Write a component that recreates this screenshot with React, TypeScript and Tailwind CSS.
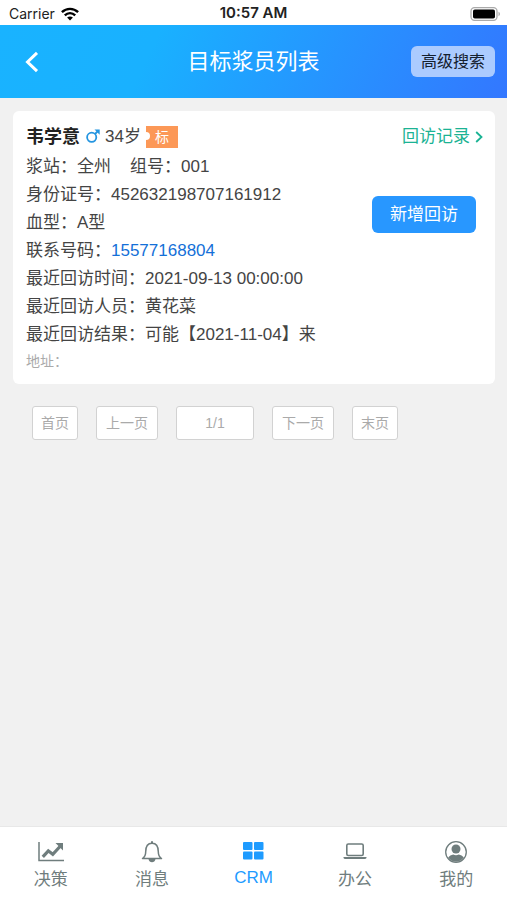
import type { ReactNode } from "react"

type Tab = {
  label: string
  icon: ReactNode
  active?: boolean
}

const details = [
  { label: "身份证号", value: "452632198707161912" },
  { label: "血型", value: "A型" },
  { label: "联系号码", value: "15577168804", tel: true },
  { label: "最近回访时间", value: "2021-09-13 00:00:00" },
  { label: "最近回访人员", value: "黄花菜" },
  { label: "最近回访结果", value: "可能【2021-11-04】来" },
]

const pages = [
  { label: "首页", width: "w-[46px]" },
  { label: "上一页", width: "w-[62px]" },
  { label: "1/1", width: "w-[78px]" },
  { label: "下一页", width: "w-[62px]" },
  { label: "末页", width: "w-[46px]" },
]

const tabs: Tab[] = [
  {
    label: "决策",
    icon: (
      <svg width="28" height="24" viewBox="0 0 28 24" fill="none" stroke="currentColor">
        <path d="M2 2v18.500h25" strokeWidth="1.500" />
        <path d="M5.800 16.800l5.500-6 4.500 3.500L23 6.500" strokeWidth="3.200" />
        <path d="M18.500 3h7.500v7.500z" fill="currentColor" stroke="none" />
      </svg>
    ),
  },
  {
    label: "消息",
    icon: (
      <svg width="28" height="24" viewBox="0 0 28 24" fill="none" stroke="currentColor">
        <path
          d="M4.500 18.600c2.400-1.600 3.200-3 3.200-6.800 0-5 2.200-8.500 6.300-8.500s6.300 3.500 6.300 8.500c0 3.800.8 5.200 3.200 6.800z"
          strokeWidth="1.500"
          strokeLinejoin="round"
        />
        <path d="M14 1.200v2" strokeWidth="2" />
        <path d="M10.500 19h7c-.4 2.200-1.800 3.200-3.500 3.200s-3.100-1-3.500-3.200z" fill="currentColor" stroke="none" />
      </svg>
    ),
  },
  {
    label: "CRM",
    active: true,
    icon: (
      <svg width="28" height="24" viewBox="0 0 28 24" fill="currentColor">
        <rect x="4" y="2" width="9.500" height="8" rx="1" />
        <rect x="15" y="2" width="9.500" height="8" rx="1" />
        <rect x="4" y="11.500" width="9.500" height="8" rx="1" />
        <rect x="15" y="11.500" width="9.500" height="8" rx="1" />
      </svg>
    ),
  },
  {
    label: "办公",
    icon: (
      <svg width="28" height="24" viewBox="0 0 28 24" fill="none" stroke="currentColor">
        <rect x="5.800" y="4" width="16.400" height="11.500" rx="1.500" strokeWidth="1.600" />
        <path d="M2.500 17h23v.6c0 .8-.6 1.400-1.400 1.400H3.900c-.8 0-1.400-.6-1.400-1.400z" fill="currentColor" stroke="none" />
      </svg>
    ),
  },
  {
    label: "我的",
    icon: (
      <svg width="28" height="24" viewBox="0 0 28 24" fill="none" stroke="currentColor">
        <circle cx="14" cy="12" r="10.300" strokeWidth="1.300" />
        <circle cx="14" cy="9" r="4.500" fill="currentColor" stroke="none" />
        <path d="M6.200 17.600c1.200-1.900 3-2.800 5-3.200 1.800 1 3.800 1 5.600 0 2 .4 3.800 1.300 5 3.200-1.800 2.600-4.500 4.200-7.800 4.200s-6-1.600-7.800-4.200z" fill="currentColor" stroke="none" />
      </svg>
    ),
  },
]

function StatusBar() {
  return (
    <div className="grid h-[25px] grid-cols-3 items-center bg-white px-[6px] pt-[2px] font-[Inter,sans-serif] text-[14px] text-[#222]">
      <div className="flex items-center gap-[6px] pl-[3px]">
        <span>Carrier</span>
        <svg width="18" height="14" viewBox="0 0 18 14" fill="none" stroke="#000" strokeWidth="2.400">
          <path d="M.9 5.200c4.700-4.500 11.500-4.500 16.200 0" />
          <path d="M3.800 8.300c3-2.900 7.400-2.900 10.400 0" />
          <path d="M9 13.600l-2.900-3c1.700-1.500 4.100-1.500 5.800 0z" fill="#000" stroke="none" />
        </svg>
      </div>
      <span className="text-center text-[15px] font-semibold">10:57 AM</span>
      <svg className="justify-self-end" width="31" height="14" viewBox="0 0 31 14">
        <rect x="1" y=".7" width="26" height="12.600" rx="3.500" fill="#fff" stroke="#aaa" strokeWidth="1.300" />
        <rect x="3" y="2.400" width="22" height="9.200" rx="1.800" fill="#000" />
        <path d="M28.500 4.800c1.900.7 1.900 3.700 0 4.400z" fill="#aaa" />
      </svg>
    </div>
  )
}

function Header() {
  return (
    <header className="grid h-[73px] grid-cols-[1fr_auto_1fr] items-center bg-linear-[115deg,#19b3ff_0%,#19b1ff_30%,#3377ff_100%] px-3">
      <button aria-label="返回" className="ml-[6px] flex size-7 items-center justify-center text-white">
        <svg width="14" height="22" viewBox="0 0 14 22" fill="none" stroke="currentColor" strokeWidth="3">
          <path d="M12 1.800L2.500 11l9.500 9.200" />
        </svg>
      </button>
      <h1 className="text-[22px] text-white">目标浆员列表</h1>
      <button className="h-[31px] justify-self-end rounded-md bg-[#abcbff] px-[10px] text-[16px] text-[#14202e]">
        高级搜索
      </button>
    </header>
  )
}

function DonorCard() {
  return (
    <section className="mt-[13px] mr-3 ml-[13px] rounded-md bg-white pt-[10px] pr-3 pb-[11px] pl-[13px] text-[17px] leading-[28px] text-[#444]">
      <div className="flex h-[32px] items-center">
        <h2 className="text-[18px] font-bold text-[#222]">韦学意</h2>
        <svg className="ml-[6px]" width="14" height="16" viewBox="0 0 14 16" fill="none" stroke="#2495e0" strokeWidth="1.800">
          <circle cx="5.700" cy="8.300" r="4.600" />
          <path d="M9 5l3.600-3.600" />
          <path d="M8.500.5H13.700v5.200z" fill="#2495e0" stroke="none" />
        </svg>
        <span className="ml-[5px]">34岁</span>
        <span className="relative ml-[5px] h-[22px] w-[32px] overflow-hidden bg-[#fc9857] text-center text-[14px] leading-[22px] text-white">
          <span className="absolute top-[6px] -left-1 size-2 rounded-full bg-white" />
          标
        </span>
        <a href="#records" className="ml-auto flex items-center gap-[5px] text-[#1bb394]">
          回访记录
          <svg width="8" height="12" viewBox="0 0 8 12" fill="none" stroke="currentColor" strokeWidth="1.800">
            <path d="M1.200 1l5.300 5-5.300 5" />
          </svg>
        </a>
      </div>
      <div className="flex items-start justify-between">
        <div>
          <p className="flex gap-[19px]">
            <span>浆站：全州</span>
            <span>组号：001</span>
          </p>
          {details.map(d => (
            <p key={d.label}>
              {d.label}：
              {d.tel ? (
                <a href={`tel:${d.value}`} className="text-[#1470d8]">{d.value}</a>
              ) : (
                d.value
              )}
            </p>
          ))}
        </div>
        <button className="mt-[43px] mr-[7px] h-[37px] w-[104px] rounded-md bg-[#2897ff] text-white">
          新增回访
        </button>
      </div>
      <p className="text-[14px] leading-[24px] text-[#aaa]">地址：</p>
    </section>
  )
}

function Pagination() {
  return (
    <nav aria-label="分页" className="mt-[22px] flex gap-[18px] px-8 text-[14px] text-[#aaa]">
      {pages.map(p => (
        <button key={p.label} className={`h-[34px] rounded-[3px] border border-[#d2d2d2] bg-white ${p.width}`}>
          {p.label}
        </button>
      ))}
    </nav>
  )
}

function TabBar() {
  return (
    <nav className="grid h-[74px] grid-cols-5 border-t border-[#e8e8e8] bg-white">
      {tabs.map(t => (
        <button
          key={t.label}
          className={`flex flex-col items-center pt-[13px] text-[17px] ${t.active ? "text-[#1e9bff]" : "text-[#6f7d7d]"}`}
        >
          {t.icon}
          <span className={t.active ? "leading-[28px]" : "leading-[32px]"}>{t.label}</span>
        </button>
      ))}
    </nav>
  )
}

export default function App() {
  return (
    <div className="flex min-h-screen flex-col bg-[#f1f1f1] font-['Liberation_Sans','Noto_Sans_CJK_SC',sans-serif]">
      <StatusBar />
      <Header />
      <main className="flex-1">
        <DonorCard />
        <Pagination />
      </main>
      <TabBar />
    </div>
  )
}
